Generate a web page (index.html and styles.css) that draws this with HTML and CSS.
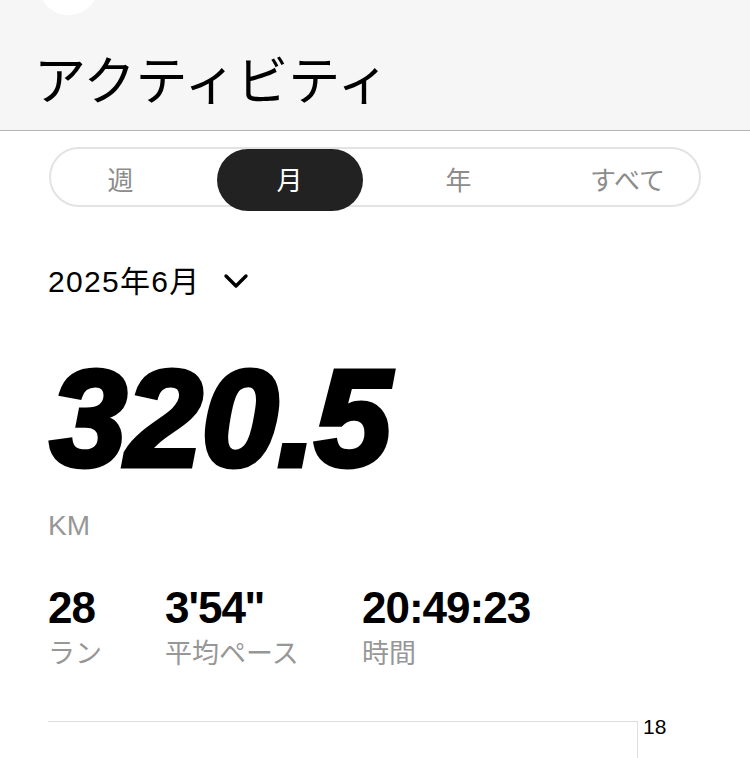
FILE: index.html
```html
<!DOCTYPE html>
<html lang="ja">
<head>
<meta charset="utf-8">
<link rel="stylesheet" href="styles.css">
</head>
<body>
<header class="header">
  <div class="avatar"></div>
  <h1 class="title">アクティビティ</h1>
</header>
<main class="content">
  <div class="segments">
    <div class="seg-grid">
      <div class="seg">週</div>
      <div class="seg"><span class="pill">月</span></div>
      <div class="seg">年</div>
      <div class="seg">すべて</div>
    </div>
  </div>
  <div class="period">
    <span class="date">2025年6月</span>
    <svg class="chev" width="26" height="18" viewBox="0 0 26 18"><path d="M3 4 L13 14 L23 4" fill="none" stroke="#000" stroke-width="3.4" stroke-linecap="round" stroke-linejoin="round"/></svg>
  </div>
  <div class="big">320.5</div>
  <div class="unit">KM</div>
  <div class="stats">
    <div class="stat s1"><div class="val">28</div><div class="lbl">ラン</div></div>
    <div class="stat s2"><div class="val">3'54''</div><div class="lbl">平均ペース</div></div>
    <div class="stat s3"><div class="val">20:49:23</div><div class="lbl">時間</div></div>
  </div>
  <div class="chart">
    <div class="chart-area"></div>
    <div class="axis">18</div>
  </div>
</main>
</body>
</html>
```
FILE: styles.css
```css
html, body {
  margin: 0;
  padding: 0;
  background: #fff;
  overflow: hidden;
}
body {
  width: 750px;
  height: 758px;
  font-family: "Liberation Sans", "Noto Sans CJK JP", sans-serif;
  color: #000;
}
.header {
  position: relative;
  height: 130px;
  background: #f6f6f6;
  border-bottom: 1px solid #b4b4b4;
  overflow: hidden;
}
.avatar {
  position: absolute;
  left: 38px;
  top: -46px;
  width: 61px;
  height: 61px;
  border-radius: 50%;
  background: #fff;
}
.title {
  margin: 0;
  padding: 42px 0 0 34px;
  font-family: "Noto Sans CJK JP", sans-serif;
  font-weight: 400;
  font-size: 52px;
  line-height: 72px;
}
.content {
  padding: 0 48px;
}
.segments {
  margin-top: 16px;
  margin-left: 1px;
  width: 648px;
  height: 56px;
  border: 2px solid #e3e3e3;
  border-radius: 30px;
}
.seg-grid {
  display: grid;
  grid-template-columns: repeat(4, 169px);
  margin-left: -15px;
  height: 56px;
}
.seg {
  display: flex;
  align-items: center;
  justify-content: center;
  padding-bottom: 4px;
  font-family: "Noto Sans CJK JP", sans-serif;
  font-size: 26px;
  color: #8c8c8c;
}
.pill {
  display: flex;
  align-items: center;
  justify-content: center;
  width: 146px;
  height: 62px;
  margin-bottom: -4px;
  padding-bottom: 4px;
  box-sizing: border-box;
  border-radius: 31px;
  background: #222;
  color: #fff;
}
.period {
  display: flex;
  align-items: center;
  margin-top: 52px;
  height: 40px;
  font-size: 30px;
}
.date {
  letter-spacing: 1.3px;
}
.chev {
  margin-left: 22px;
  margin-top: 4px;
}
.big {
  margin-top: 54px;
  margin-left: 2px;
  font-weight: 700;
  font-style: italic;
  font-size: 138px;
  line-height: 130px;
  letter-spacing: -1px;
  -webkit-text-stroke: 5px #000;
}
.unit {
  margin-top: 28px;
  font-size: 28px;
  color: #979797;
  line-height: 30px;
}
.stats {
  display: flex;
  margin-top: 44px;
}
.stat .val {
  font-weight: 700;
  font-size: 44px;
  line-height: 46px;
  letter-spacing: -1px;
}
.stat .lbl {
  margin-top: 2px;
  font-family: "Noto Sans CJK JP", sans-serif;
  font-size: 27px;
  line-height: 38px;
  color: #979797;
}
.s1 { width: 117px; }
.s2 { width: 197px; }
.chart {
  display: flex;
  margin-top: 50px;
}
.chart-area {
  width: 589px;
  height: 40px;
  border-top: 1px solid #dedede;
  border-right: 1px solid #dedede;
}
.axis {
  margin-left: 5px;
  margin-top: -6px;
  font-size: 21px;
  line-height: 24px;
}
```
